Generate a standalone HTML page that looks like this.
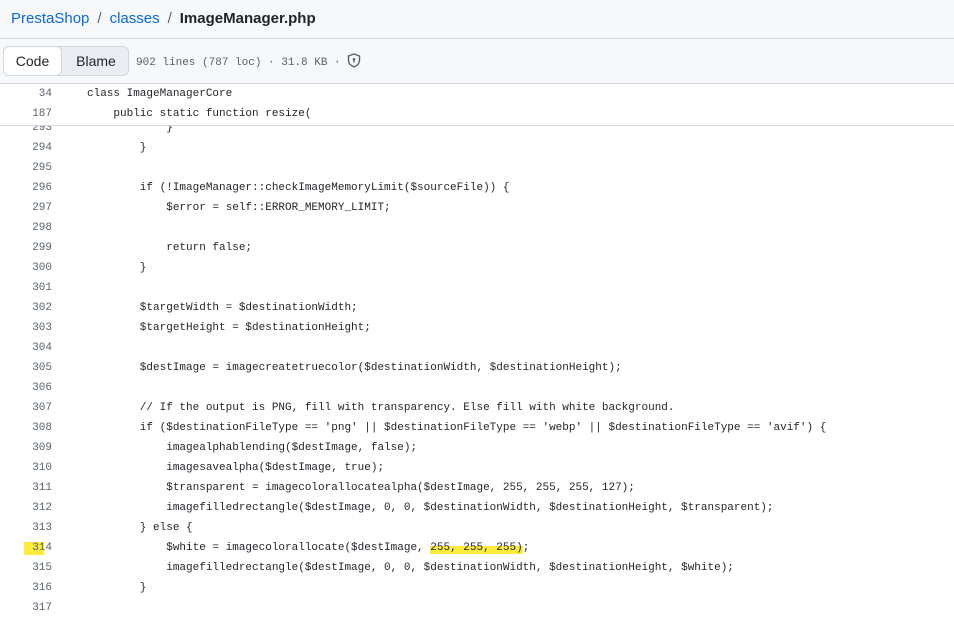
<!DOCTYPE html>
<html><head><style>
body{margin:0;width:954px;height:621px;overflow:hidden;background:#fff;font-family:"Liberation Sans",sans-serif;position:relative}
.top{position:absolute;left:0;top:0;width:954px;height:38px;background:#f6f8fa;border-bottom:1px solid #d0d7de}
.bc{position:absolute;left:11px;top:10px;font-size:15px;color:#1f2328}
.bc a{color:#0969da;text-decoration:none}
.bc .s{color:#59636e;margin:0 8px}
.bar{position:absolute;left:0;top:39px;width:954px;height:44px;background:#f6f8fa;border-bottom:1px solid #d0d7de}
.seg{position:absolute;left:3px;top:7px;width:124px;height:28px;border:1px solid #d0d7de;border-radius:6px;background:#eaeef2}
.seg .c{position:absolute;left:0;top:0;width:57px;height:28px;background:#fff;border:1px solid #d0d7de;border-radius:6px;margin:-1px;font-size:14px;line-height:28px;text-align:center;color:#1f2328}
.seg .b{position:absolute;left:60px;top:0;width:64px;line-height:28px;text-align:center;font-size:14px;color:#1f2328}
.meta{position:absolute;left:136px;top:53px;font-family:"Liberation Mono",monospace;font-size:11px;color:#59636e}
.sticky{position:absolute;left:0;top:84px;width:954px;height:41px;border-bottom:1px solid #d0d7de;background:#fff;z-index:2}
.code{position:absolute;left:0;top:126px;width:954px;height:495px;overflow:hidden}
.row{position:absolute;left:0;height:20px;width:954px;font-family:"Liberation Mono",monospace;font-size:11px;line-height:20px;color:#1f2328;white-space:pre}
.n{position:absolute;left:0;width:52px;text-align:right;color:#59636e}
.t{position:absolute;left:87px}
.hl{background:linear-gradient(180deg,transparent 4px,#ffeb3b 4px,#ffeb3b 17px,transparent 17px)}
</style></head><body>
<div class="top"><div class="bc"><a>PrestaShop</a><span class="s">/</span><a>classes</a><span class="s">/</span><b style="font-weight:600">ImageManager.php</b></div></div>
<div class="bar"><div class="seg"><div class="c">Code</div><div class="b">Blame</div></div></div>
<div class="meta" style="z-index:3">902 lines (787 loc) · 31.8 KB · <svg width="14" height="15" viewBox="0 0 14 15" style="vertical-align:-3px"><path d="M7 1L12.5 3v4.5c0 3-2.5 5.2-5.5 6.3C4 12.7 1.5 10.5 1.5 7.5V3z" fill="none" stroke="#59636e" stroke-width="1.4"/><circle cx="7" cy="6.3" r="1.3" fill="#59636e"/><path d="M7 7v2.5" stroke="#59636e" stroke-width="1.4"/></svg></div>
<div class="sticky">
<div class="row" style="top:0"><span class="n">34</span><span class="t">class ImageManagerCore</span></div>
<div class="row" style="top:20px"><span class="n">187</span><span class="t">    public static function resize(</span></div>
</div>
<div class="code">
<div class="row" style="top:-8px"><span class="n">293</span><span class="t">            }</span></div>
<div class="row" style="top:12px"><span class="n">294</span><span class="t">        }</span></div>
<div class="row" style="top:32px"><span class="n">295</span><span class="t"></span></div>
<div class="row" style="top:52px"><span class="n">296</span><span class="t">        if (!ImageManager::checkImageMemoryLimit($sourceFile)) {</span></div>
<div class="row" style="top:72px"><span class="n">297</span><span class="t">            $error = self::ERROR_MEMORY_LIMIT;</span></div>
<div class="row" style="top:92px"><span class="n">298</span><span class="t"></span></div>
<div class="row" style="top:112px"><span class="n">299</span><span class="t">            return false;</span></div>
<div class="row" style="top:132px"><span class="n">300</span><span class="t">        }</span></div>
<div class="row" style="top:152px"><span class="n">301</span><span class="t"></span></div>
<div class="row" style="top:172px"><span class="n">302</span><span class="t">        $targetWidth = $destinationWidth;</span></div>
<div class="row" style="top:192px"><span class="n">303</span><span class="t">        $targetHeight = $destinationHeight;</span></div>
<div class="row" style="top:212px"><span class="n">304</span><span class="t"></span></div>
<div class="row" style="top:232px"><span class="n">305</span><span class="t">        $destImage = imagecreatetruecolor($destinationWidth, $destinationHeight);</span></div>
<div class="row" style="top:252px"><span class="n">306</span><span class="t"></span></div>
<div class="row" style="top:272px"><span class="n">307</span><span class="t">        // If the output is PNG, fill with transparency. Else fill with white background.</span></div>
<div class="row" style="top:292px"><span class="n">308</span><span class="t">        if ($destinationFileType == 'png' || $destinationFileType == 'webp' || $destinationFileType == 'avif') {</span></div>
<div class="row" style="top:312px"><span class="n">309</span><span class="t">            imagealphablending($destImage, false);</span></div>
<div class="row" style="top:332px"><span class="n">310</span><span class="t">            imagesavealpha($destImage, true);</span></div>
<div class="row" style="top:352px"><span class="n">311</span><span class="t">            $transparent = imagecolorallocatealpha($destImage, 255, 255, 255, 127);</span></div>
<div class="row" style="top:372px"><span class="n">312</span><span class="t">            imagefilledrectangle($destImage, 0, 0, $destinationWidth, $destinationHeight, $transparent);</span></div>
<div class="row" style="top:392px"><span class="n">313</span><span class="t">        } else {</span></div>
<div class="row" style="top:412px"><span style="position:absolute;left:24px;top:4px;width:20px;height:13px;background:#ffeb3b"></span><span class="n">314</span><span class="t">            $white = imagecolorallocate($destImage, <span class="hl">255, 255, 255)</span>;</span></div>
<div class="row" style="top:432px"><span class="n">315</span><span class="t">            imagefilledrectangle($destImage, 0, 0, $destinationWidth, $destinationHeight, $white);</span></div>
<div class="row" style="top:452px"><span class="n">316</span><span class="t">        }</span></div>
<div class="row" style="top:472px"><span class="n">317</span><span class="t"></span></div>
</div>
</body></html>
